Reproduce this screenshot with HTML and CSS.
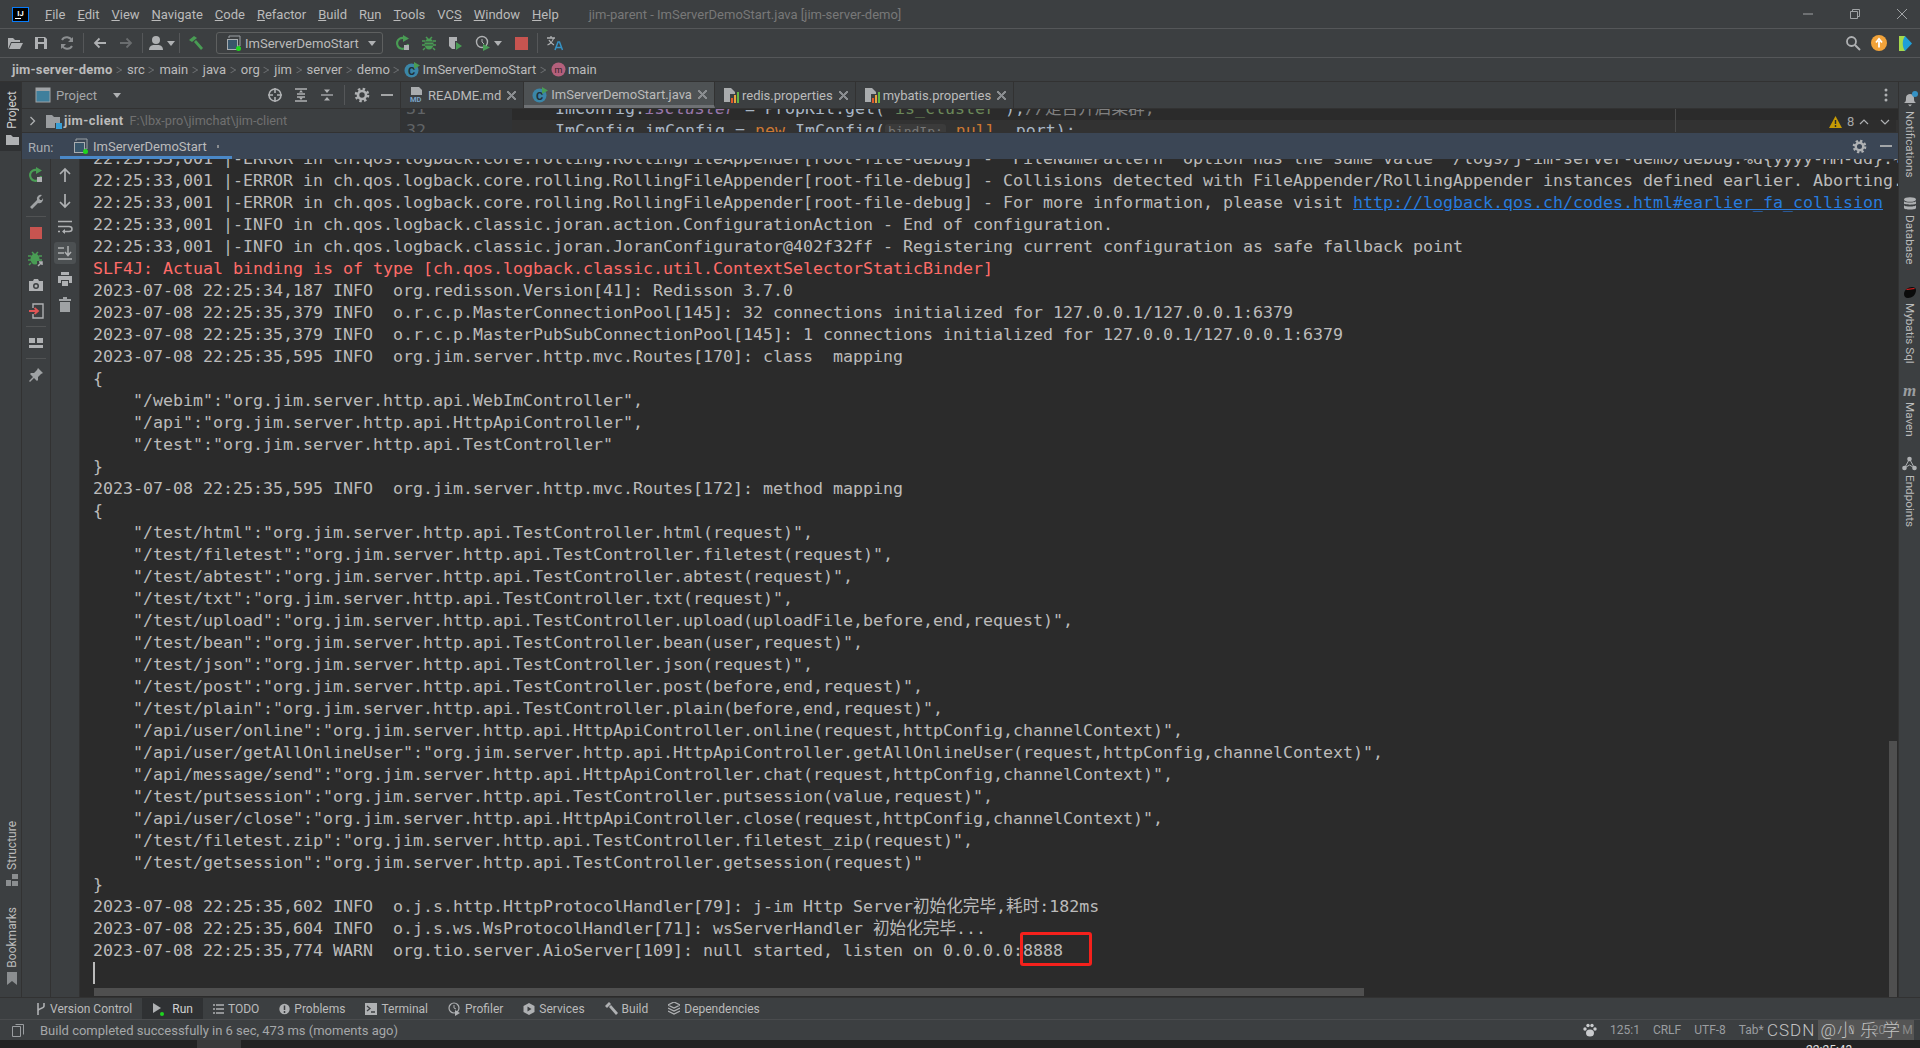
FILE: index.html
```html
<!DOCTYPE html>
<html>
<head>
    <meta charset="utf-8">
    <link rel="stylesheet" href="styles.css">
</head>
<body>
    <svg class="icon-defs" width="0" height="0">
        <symbol id="i-runcfg" viewBox="0 0 16 16">
            <path d="M3 3V1h11v10h-2" fill="none" stroke="#9aa0a4"/>
            <rect x="1.5" y="4.5" width="10" height="10" fill="#39566b" stroke="#a8adb0"/>
            <circle cx="12.5" cy="13.5" r="2.5" fill="#1fd51f"/>
        </symbol>
        <symbol id="i-class" viewBox="0 0 16 16">
            <circle cx="7.5" cy="8.5" r="7" fill="#3b86a8"/>
            <text x="7.5" y="12.5" font-size="11" font-family="Roboto" font-weight="700" text-anchor="middle" fill="#1f2f38">C</text>
            <path d="M10 0l6 3.5-6 3.5z" fill="#499c54"/>
        </symbol>
        <symbol id="i-props" viewBox="0 0 16 16">
            <path d="M1 1h7l4 4v2H7v8H1z" fill="#a9acae"/>
            <rect x="8" y="11" width="2" height="5" fill="#e05a2b"/>
            <rect x="11" y="8" width="2" height="8" fill="#e8a33d"/>
            <rect x="14" y="5" width="2" height="11" fill="#62b543"/>
        </symbol>
        <symbol id="i-gear" viewBox="0 0 16 16">
            <circle cx="8" cy="8" r="6" fill="none" stroke="currentColor" stroke-width="2.6" stroke-dasharray="2.4 2.3"/>
            <circle cx="8" cy="8" r="4" fill="none" stroke="currentColor" stroke-width="2.6"/>
        </symbol>
    </svg>

    <div class="ide">
        <header class="titlebar">
            <svg class="logo-ij" width="17" height="15" viewBox="0 0 17 15">
                <rect x=".5" y=".5" width="16" height="14" fill="#000" stroke="#087cfa"/>
                <text x="8.5" y="8.5" font-size="7.5" font-family="Roboto" font-weight="700" text-anchor="middle" fill="#fff">IJ</text>
                <rect x="3" y="11" width="6" height="1" fill="#fff"/>
            </svg>
            <nav class="menu">
                <span><u>F</u>ile</span>
                <span><u>E</u>dit</span>
                <span><u>V</u>iew</span>
                <span><u>N</u>avigate</span>
                <span><u>C</u>ode</span>
                <span><u>R</u>efactor</span>
                <span><u>B</u>uild</span>
                <span>R<u>u</u>n</span>
                <span><u>T</u>ools</span>
                <span>VC<u>S</u></span>
                <span><u>W</u>indow</span>
                <span><u>H</u>elp</span>
            </nav>
            <span class="window-title">jim-parent - ImServerDemoStart.java [jim-server-demo]</span>
            <div class="window-btns">
                <svg width="12" height="12" viewBox="0 0 12 12"><path d="M1 6h10" stroke="#a0a3a5"/></svg>
                <svg width="12" height="12" viewBox="0 0 12 12"><path d="M1.5 3.5h7v7h-7zM3.5 3V1.5h7v7H9" fill="none" stroke="#a0a3a5"/></svg>
                <svg width="12" height="12" viewBox="0 0 12 12"><path d="M1 1l10 10M11 1L1 11" stroke="#a0a3a5"/></svg>
            </div>
        </header>

        <div class="toolbar">
            <span class="tb"><svg width="16" height="16" viewBox="0 0 16 16"><path d="M1 3h5l2 2h5v2H4l-3 7z" fill="#afb1b3"/><path d="M4.500 8H16l-3 6H2z" fill="#afb1b3"/></svg></span>
            <span class="tb"><svg width="16" height="16" viewBox="0 0 16 16"><path d="M2 2h10l2 2v10H2z" fill="#afb1b3"/><rect x="5" y="3" width="6" height="4" fill="#3c3f41"/><rect x="5" y="9" width="6" height="5" fill="#3c3f41"/></svg></span>
            <span class="tb"><svg width="16" height="16" viewBox="0 0 16 16"><path d="M13 6a5.500 5.500 0 0 0-10-1M3 10a5.500 5.500 0 0 0 10 1" fill="none" stroke="#8b8e90" stroke-width="2"/><path d="M14 2v5H9zM2 14V9h5z" fill="#8b8e90"/></svg></span>
            <span class="tb-sep"></span>
            <span class="tb"><svg width="16" height="16" viewBox="0 0 16 16"><path d="M14 8H3M7.500 3.500L3 8l4.500 4.500" fill="none" stroke="#afb1b3" stroke-width="1.800"/></svg></span>
            <span class="tb"><svg width="16" height="16" viewBox="0 0 16 16"><path d="M2 8h11M8.500 3.500L13 8l-4.500 4.500" fill="none" stroke="#6a6d6f" stroke-width="1.800"/></svg></span>
            <span class="tb-sep"></span>
            <span class="tb tb-wide">
                <svg width="16" height="16" viewBox="0 0 16 16"><circle cx="8" cy="5" r="4" fill="#afb1b3"/><path d="M1 15c0-4 3-5 5-5h4c2 0 5 1 5 5z" fill="#afb1b3"/></svg>
                <i class="caret"></i>
            </span>
            <span class="tb-sep"></span>
            <span class="tb"><svg width="16" height="16" viewBox="0 0 16 16"><path d="M1 5l5-4 3 2-5 4zM6 7l2-2 7 8-2 2z" fill="#499c54"/></svg></span>
            <div class="run-config">
                <svg width="16" height="16"><use href="#i-runcfg"/></svg>
                <span>ImServerDemoStart</span>
                <i class="caret"></i>
            </div>
            <span class="tb"><svg width="16" height="16" viewBox="0 0 16 16"><path d="M13 9a5.500 5.500 0 1 1-4-6" fill="none" stroke="#499c54" stroke-width="2.200"/><path d="M8 0l6 3.500L8 7z" fill="#499c54"/><rect x="9" y="10" width="5" height="5" fill="#afb1b3"/></svg></span>
            <span class="tb"><svg width="16" height="16" viewBox="0 0 16 16"><ellipse cx="8" cy="9" rx="4.500" ry="5.500" fill="#499c54"/><path d="M5 2l2 2M11 2L9 4M1 6h3M12 6h3M1 10h3M12 10h3M2 15l2-2M14 15l-2-2" stroke="#499c54" stroke-width="1.500"/><path d="M4 7h8M4 10h8" stroke="#3c3f41"/></svg></span>
            <span class="tb"><svg width="16" height="16" viewBox="0 0 16 16"><path d="M2 2h6v12H5L2 11z" fill="#afb1b3"/><path d="M8 2h2v4H8z" fill="#afb1b3"/><path d="M9 7l6 4-6 4z" fill="#499c54"/></svg></span>
            <span class="tb tb-profile">
                <svg width="16" height="16" viewBox="0 0 16 16"><circle cx="7" cy="7" r="5.500" fill="none" stroke="#afb1b3" stroke-width="1.400"/><path d="M7 4v3l2 2" fill="none" stroke="#afb1b3"/><path d="M8 9l7 3.500L8 16z" fill="#499c54"/></svg>
                <i class="caret"></i>
            </span>
            <span class="tb"><span class="stop-square"></span></span>
            <span class="tb-sep"></span>
            <span class="tb"><svg width="17" height="16" viewBox="0 0 17 16"><path d="M1 3h8M5 1v2M7.500 3C7 6 4 9 1.500 10M3 5c1 2 3 4 5 5" fill="none" stroke="#afb1b3" stroke-width="1.300"/><path d="M9 15l3-8h1.500l3 8M10.500 12.500h4.500" fill="none" stroke="#3592c4" stroke-width="1.500"/></svg></span>
            <div class="toolbar-right">
                <span class="tb"><svg width="16" height="16" viewBox="0 0 16 16"><circle cx="6.500" cy="6.500" r="4.500" fill="none" stroke="#afb1b3" stroke-width="1.800"/><path d="M10 10l5 5" stroke="#afb1b3" stroke-width="2"/></svg></span>
                <span class="tb"><svg width="16" height="16" viewBox="0 0 16 16"><circle cx="8" cy="8" r="8" fill="#f2a33a"/><path d="M8 12.500V6M5 7.500L8 4l3 3.500" fill="none" stroke="#fff" stroke-width="1.800"/></svg></span>
                <span class="tb"><svg width="15" height="17" viewBox="0 0 15 17"><path d="M1 1l6 0 7 7.500-7 7.500H1z" fill="#1f9fd8"/><path d="M1 1l6 0c-3 4-3 11 0 15H1z" fill="#a6d94c"/></svg></span>
            </div>
        </div>

        <div class="breadcrumb">
            <b>jim-server-demo</b><i class="crumb-sep"></i>
            <span>src</span><i class="crumb-sep"></i>
            <span>main</span><i class="crumb-sep"></i>
            <span>java</span><i class="crumb-sep"></i>
            <span>org</span><i class="crumb-sep"></i>
            <span>jim</span><i class="crumb-sep"></i>
            <span>server</span><i class="crumb-sep"></i>
            <span>demo</span><i class="crumb-sep"></i>
            <svg class="crumb-icon" width="16" height="16"><use href="#i-class"/></svg>
            <span>ImServerDemoStart</span><i class="crumb-sep"></i>
            <svg class="crumb-icon" width="15" height="15" viewBox="0 0 15 15"><circle cx="7.500" cy="7.500" r="7" fill="#b4607c"/><text x="7.500" y="10.500" font-size="9" font-family="Roboto" text-anchor="middle" fill="#33222a">m</text></svg>
            <span>main</span>
        </div>

        <div class="workspace">
            <aside class="stripe stripe-left">
                <div class="stripe-btn stripe-btn-active">
                    <span class="stripe-label">Project</span>
                    <svg width="13" height="12" viewBox="0 0 13 12"><path d="M0 1h5l2 2h6v8H0z" fill="#afb1b3"/></svg>
                </div>
                <div class="stripe-bottom">
                    <div class="stripe-btn">
                        <span class="stripe-label">Structure</span>
                        <svg width="13" height="12" viewBox="0 0 13 12"><path d="M6 0h6v5H6zM0 6h5v6H0zM6 7h6v5H6z" fill="#8b8e90"/></svg>
                    </div>
                    <div class="stripe-btn">
                        <span class="stripe-label">Bookmarks</span>
                        <svg width="13" height="13" viewBox="0 0 13 13"><path d="M1 0h10v13l-5-4-5 4z" fill="#8b8e90"/></svg>
                    </div>
                </div>
            </aside>

            <main class="center">
                <div class="top-area">
                    <section class="project">
                        <div class="project-head">
                            <svg width="16" height="16" viewBox="0 0 16 16"><rect x="1" y="1" width="14" height="14" fill="#3f7f9c" stroke="#9fa3a6"/><rect x="1" y="1" width="14" height="3" fill="#9fa3a6"/></svg>
                            <span class="project-name">Project</span>
                            <i class="caret"></i>
                            <div class="project-actions">
                                <svg width="16" height="16" viewBox="0 0 16 16"><circle cx="8" cy="8" r="6" fill="none" stroke="#afb1b3" stroke-width="1.600"/><path d="M8 1v5M8 10v5M1 8h5M10 8h5" stroke="#afb1b3" stroke-width="1.600"/></svg>
                                <svg width="16" height="16" viewBox="0 0 16 16"><path d="M2 2h12M2 14h12M4 7h8M4 10h8" stroke="#afb1b3" stroke-width="1.300"/><path d="M8 3l2 2.500H6zM8 13l2-2.500H6z" fill="#afb1b3"/></svg>
                                <svg width="16" height="16" viewBox="0 0 16 16"><path d="M2 8h12" stroke="#afb1b3" stroke-width="1.300"/><path d="M8 6L5 2.500h6zM8 10l-3 3.500h6z" fill="#afb1b3"/></svg>
                                <span class="head-sep"></span>
                                <svg class="gear" width="16" height="16"><use href="#i-gear"/></svg>
                                <svg width="14" height="14" viewBox="0 0 14 14"><path d="M1 7h12" stroke="#afb1b3" stroke-width="1.800"/></svg>
                            </div>
                        </div>
                        <div class="tree-row">
                            <svg width="8" height="10" viewBox="0 0 8 10"><path d="M1.500 1l4 4-4 4" fill="none" stroke="#afb1b3" stroke-width="1.300"/></svg>
                            <svg width="16" height="16" viewBox="0 0 16 16"><path d="M0 2h6l2 2h6v6H9v5H0z" fill="#9a9da0"/><rect x="10" y="10" width="6" height="6" fill="#389fd6"/></svg>
                            <b>jim-client</b>
                            <span class="tree-path">F:\lbx-pro\jimchat\jim-client</span>
                        </div>
                    </section>

                    <section class="editor">
                        <div class="tabs">
                            <div class="tab">
                                <svg width="16" height="16" viewBox="0 0 16 16"><path d="M2 0h8l3 3v5H2z" fill="#a9acae"/><text x="1" y="15" font-size="7.500" font-family="Roboto" font-weight="700" fill="#7aa5c9">MD</text></svg>
                                <span>README.md</span><i class="tab-close"></i>
                            </div>
                            <div class="tab tab-active">
                                <svg width="16" height="16"><use href="#i-class"/></svg>
                                <span>ImServerDemoStart.java</span><i class="tab-close"></i>
                            </div>
                            <div class="tab">
                                <svg width="16" height="16"><use href="#i-props"/></svg>
                                <span>redis.properties</span><i class="tab-close"></i>
                            </div>
                            <div class="tab">
                                <svg width="16" height="16"><use href="#i-props"/></svg>
                                <span>mybatis.properties</span><i class="tab-close"></i>
                            </div>
                            <svg class="tabs-more" width="4" height="16" viewBox="0 0 4 16"><circle cx="2" cy="3" r="1.500" fill="#afb1b3"/><circle cx="2" cy="8" r="1.500" fill="#afb1b3"/><circle cx="2" cy="13" r="1.500" fill="#afb1b3"/></svg>
                        </div>
                        <div class="code-view">
                            <div class="code-line">
                                <span class="line-no">31</span>
                                <code>ImConfig.<em>isCluster</em> = PropKit.get(<span class="str">"is_cluster"</span>);<span class="cmt">//是否开启集群,</span></code>
                            </div>
                            <div class="code-line code-line-current">
                                <span class="line-no">32</span>
                                <code>ImConfig imConfig = <span class="kw">new</span> ImConfig(<span class="hint">bindIp:</span> <span class="kw">null</span>, port);</code>
                            </div>
                            <span class="margin-line"></span>
                            <div class="inspection">
                                <svg width="13" height="12" viewBox="0 0 13 12"><path d="M6.500 0L13 12H0z" fill="#c69a05"/><path d="M6.500 4v4M6.500 9v2" stroke="#2b2b2b" stroke-width="1.400"/></svg>
                                <span>8</span>
                                <svg width="10" height="6" viewBox="0 0 10 6"><path d="M1 5l4-4 4 4" fill="none" stroke="#afb1b3" stroke-width="1.200"/></svg>
                                <svg width="10" height="6" viewBox="0 0 10 6"><path d="M1 1l4 4 4-4" fill="none" stroke="#afb1b3" stroke-width="1.200"/></svg>
                            </div>
                        </div>
                    </section>
                </div>

                <section class="run-panel">
                    <div class="run-head">
                        <span class="run-label">Run:</span>
                        <div class="run-tab">
                            <svg width="16" height="16"><use href="#i-runcfg"/></svg>
                            <span>ImServerDemoStart</span>
                            <i class="tab-close"></i>
                        </div>
                        <div class="run-head-actions">
                            <svg class="gear" width="15" height="15"><use href="#i-gear"/></svg>
                            <svg width="14" height="14" viewBox="0 0 14 14"><path d="M1 7h12" stroke="#afb1b3" stroke-width="1.800"/></svg>
                        </div>
                    </div>
                    <div class="run-body">
                        <div class="run-tools">
                            <span class="rt"><svg width="16" height="16" viewBox="0 0 16 16"><path d="M13 9a5.500 5.500 0 1 1-4-6" fill="none" stroke="#499c54" stroke-width="2.200"/><path d="M8 0l6 3.500L8 7z" fill="#499c54"/><rect x="9" y="10" width="5" height="5" fill="#afb1b3"/></svg></span>
                            <span class="rt"><svg width="16" height="16" viewBox="0 0 16 16"><path d="M2 14l7-7a4 4 0 0 1 5-5l-3 3 1 2 2 0 1-2a4 4 0 0 1-5 5l-6 6z" fill="#9fa2a4"/></svg></span>
                            <span class="rt-sep"></span>
                            <span class="rt"><span class="stop-square stop-square-big"></span></span>
                            <span class="rt"><svg width="16" height="16" viewBox="0 0 16 16"><ellipse cx="7" cy="8" rx="4.500" ry="5.500" fill="#499c54"/><path d="M4 1l2 2M10 1L8 3M0 5h3M11 5h3M0 9h3M11 9h3M1 14l2-2" stroke="#499c54" stroke-width="1.500"/><path d="M9 10h7v6H9z" fill="#3c3f41"/><path d="M10 15l4-4M11 11h3v3" fill="none" stroke="#afb1b3" stroke-width="1.500"/></svg></span>
                            <span class="rt"><svg width="16" height="16" viewBox="0 0 16 16"><path d="M1 4h4l1-2h4l1 2h4v10H1z" fill="#afb1b3"/><circle cx="8" cy="9" r="3" fill="#3c3f41"/><circle cx="8" cy="9" r="1.500" fill="#afb1b3"/></svg></span>
                            <span class="rt"><svg width="16" height="16" viewBox="0 0 16 16"><path d="M5 5V1h10v14H5v-4" fill="none" stroke="#afb1b3" stroke-width="1.400"/><path d="M1 8h8M6.500 5L10 8l-3.500 3" fill="none" stroke="#e05555" stroke-width="1.800"/></svg></span>
                            <span class="rt-sep"></span>
                            <span class="rt"><svg width="16" height="16" viewBox="0 0 16 16"><path d="M1 3h6v5H1zM9 3h6v5H9zM1 10h14v3H1z" fill="#afb1b3"/></svg></span>
                            <span class="rt-sep"></span>
                            <span class="rt"><svg width="16" height="16" viewBox="0 0 16 16"><path d="M10 1l5 5-2 1-3 3v3l-1 1-3-3-4 4-1-1 4-4-3-3 1-1h3l3-3z" fill="#9fa2a4"/></svg></span>
                        </div>
                        <div class="run-tools">
                            <span class="rt"><svg width="16" height="16" viewBox="0 0 16 16"><path d="M8 15V2M3 7l5-5 5 5" fill="none" stroke="#afb1b3" stroke-width="1.700"/></svg></span>
                            <span class="rt"><svg width="16" height="16" viewBox="0 0 16 16"><path d="M8 1v13M3 9l5 5 5-5" fill="none" stroke="#afb1b3" stroke-width="1.700"/></svg></span>
                            <span class="rt"><svg width="16" height="16" viewBox="0 0 16 16"><path d="M1 2.500h14M1 7.500h11c4 0 4 5 0 5H6M1 12.500h2" fill="none" stroke="#afb1b3" stroke-width="1.500"/><path d="M8 10l-3 2.500L8 15z" fill="#afb1b3"/></svg></span>
                            <span class="rt rt-on"><svg width="16" height="16" viewBox="0 0 16 16"><path d="M1 3h6M1 8h6M1 14h14M11 1v9M8 7l3 3.500L14 7" fill="none" stroke="#afb1b3" stroke-width="1.500"/></svg></span>
                            <span class="rt"><svg width="16" height="16" viewBox="0 0 16 16"><path d="M4 1h8v3H4zM1 5h14v7h-3V9H4v3H1zM5 10h6v5H5z" fill="#afb1b3"/></svg></span>
                            <span class="rt"><svg width="16" height="16" viewBox="0 0 16 16"><path d="M6 0h4v2h4v2H2V2h4zM3 5h10v10H3z" fill="#9fa2a4"/></svg></span>
                        </div>
                        <div class="console">
<pre class="log">22:25:33,001 |-ERROR in ch.qos.logback.core.rolling.RollingFileAppender[root-file-debug] - "FileNamePattern" option has the same value "/logs/j-im-server-demo/debug.%d{yyyy-MM-dd}.%i.log"
22:25:33,001 |-ERROR in ch.qos.logback.core.rolling.RollingFileAppender[root-file-debug] - Collisions detected with FileAppender/RollingAppender instances defined earlier. Aborting.
22:25:33,001 |-ERROR in ch.qos.logback.core.rolling.RollingFileAppender[root-file-debug] - For more information, please visit <a class="log-link">http://logback.qos.ch/codes.html#earlier_fa_collision</a>
22:25:33,001 |-INFO in ch.qos.logback.classic.joran.action.ConfigurationAction - End of configuration.
22:25:33,001 |-INFO in ch.qos.logback.classic.joran.JoranConfigurator@402f32ff - Registering current configuration as safe fallback point
<span class="log-err">SLF4J: Actual binding is of type [ch.qos.logback.classic.util.ContextSelectorStaticBinder]</span>
2023-07-08 22:25:34,187 INFO  org.redisson.Version[41]: Redisson 3.7.0
2023-07-08 22:25:35,379 INFO  o.r.c.p.MasterConnectionPool[145]: 32 connections initialized for 127.0.0.1/127.0.0.1:6379
2023-07-08 22:25:35,379 INFO  o.r.c.p.MasterPubSubConnectionPool[145]: 1 connections initialized for 127.0.0.1/127.0.0.1:6379
2023-07-08 22:25:35,595 INFO  org.jim.server.http.mvc.Routes[170]: class  mapping
{
    "/webim":"org.jim.server.http.api.WebImController",
    "/api":"org.jim.server.http.api.HttpApiController",
    "/test":"org.jim.server.http.api.TestController"
}
2023-07-08 22:25:35,595 INFO  org.jim.server.http.mvc.Routes[172]: method mapping
{
    "/test/html":"org.jim.server.http.api.TestController.html(request)",
    "/test/filetest":"org.jim.server.http.api.TestController.filetest(request)",
    "/test/abtest":"org.jim.server.http.api.TestController.abtest(request)",
    "/test/txt":"org.jim.server.http.api.TestController.txt(request)",
    "/test/upload":"org.jim.server.http.api.TestController.upload(uploadFile,before,end,request)",
    "/test/bean":"org.jim.server.http.api.TestController.bean(user,request)",
    "/test/json":"org.jim.server.http.api.TestController.json(request)",
    "/test/post":"org.jim.server.http.api.TestController.post(before,end,request)",
    "/test/plain":"org.jim.server.http.api.TestController.plain(before,end,request)",
    "/api/user/online":"org.jim.server.http.api.HttpApiController.online(request,httpConfig,channelContext)",
    "/api/user/getAllOnlineUser":"org.jim.server.http.api.HttpApiController.getAllOnlineUser(request,httpConfig,channelContext)",
    "/api/message/send":"org.jim.server.http.api.HttpApiController.chat(request,httpConfig,channelContext)",
    "/test/putsession":"org.jim.server.http.api.TestController.putsession(value,request)",
    "/api/user/close":"org.jim.server.http.api.HttpApiController.close(request,httpConfig,channelContext)",
    "/test/filetest.zip":"org.jim.server.http.api.TestController.filetest_zip(request)",
    "/test/getsession":"org.jim.server.http.api.TestController.getsession(request)"
}
2023-07-08 22:25:35,602 INFO  o.j.s.http.HttpProtocolHandler[79]: j-im Http Server初始化完毕,耗时:182ms
2023-07-08 22:25:35,604 INFO  o.j.s.ws.WsProtocolHandler[71]: wsServerHandler 初始化完毕...
2023-07-08 22:25:35,774 WARN  org.tio.server.AioServer[109]: null started, listen on 0.0.0.0:8888
<span class="caret-line"></span></pre>
                            <span class="red-box"></span>
                            <span class="scroll-v"></span>
                            <span class="scroll-h"></span>
                        </div>
                    </div>
                </section>
            </main>

            <aside class="stripe stripe-right">
                <div class="stripe-btn">
                    <svg width="16" height="16" viewBox="0 0 16 16"><path d="M2 12c2-1 2-3 2-5 0-3 2-4 4-4s4 1 4 4c0 2 0 4 2 5zM6 13.500h4L8 15.500z" fill="#afb1b3"/><circle cx="13" cy="3" r="3" fill="#3592c4"/></svg>
                    <span class="stripe-label">Notifications</span>
                </div>
                <div class="stripe-btn">
                    <svg width="14" height="14" viewBox="0 0 14 14"><ellipse cx="7" cy="2.500" rx="6" ry="2.300" fill="#afb1b3"/><path d="M1 4v2.500C1 8 13 8 13 6.500V4C13 6 1 6 1 4zM1 8v3c0 2 12 2 12 0V8C13 10 1 10 1 8z" fill="#afb1b3"/></svg>
                    <span class="stripe-label">Database</span>
                </div>
                <div class="stripe-btn">
                    <svg width="14" height="14" viewBox="0 0 14 14"><path d="M1 9c0-4 4-7 8-7 2 0 4 1 4 3 0 5-4 8-8 8-3 0-4-2-4-4z" fill="#0b0b0b"/><path d="M3 4l8-1 1 1-8 1z" fill="#d61f1f"/></svg>
                    <span class="stripe-label">Mybatis Sql</span>
                </div>
                <div class="stripe-btn">
                    <span class="maven-m">m</span>
                    <span class="stripe-label">Maven</span>
                </div>
                <div class="stripe-btn">
                    <svg width="15" height="15" viewBox="0 0 15 15"><path d="M2.500 12L7.500 3l5 9M2.500 12l5-3 5 3" fill="none" stroke="#afb1b3"/><circle cx="2.500" cy="12" r="2.300" fill="#afb1b3"/><circle cx="7.500" cy="3" r="2.300" fill="#afb1b3"/><circle cx="12.500" cy="12" r="2.300" fill="#afb1b3"/></svg>
                    <span class="stripe-label">Endpoints</span>
                </div>
            </aside>
        </div>

        <div class="toolwindows">
            <div class="tw"><svg width="10" height="14" viewBox="0 0 10 14"><path d="M2 1v12M8 1v3c0 3-6 2-6 5" fill="none" stroke="#afb1b3" stroke-width="1.600"/></svg><span>Version Control</span></div>
            <div class="tw tw-active"><svg width="14" height="14" viewBox="0 0 14 14"><path d="M1 1l8 5-8 5z" fill="#afb1b3"/><circle cx="10" cy="12" r="2" fill="#1fd51f"/></svg><span>Run</span></div>
            <div class="tw"><svg width="11" height="10" viewBox="0 0 11 10"><path d="M0 1h2M3 1h8M0 5h2M3 5h8M0 9h2M3 9h8" stroke="#afb1b3" stroke-width="1.500"/></svg><span>TODO</span></div>
            <div class="tw"><svg width="11" height="12" viewBox="0 0 11 12"><circle cx="5.500" cy="6" r="5.200" fill="#afb1b3"/><path d="M5.500 2.500v4.500M5.500 8v2" stroke="#3c3f41" stroke-width="1.500"/></svg><span>Problems</span></div>
            <div class="tw"><svg width="12" height="12" viewBox="0 0 12 12"><rect width="12" height="12" fill="#afb1b3"/><path d="M2 3l3 2.500L2 8M6 9h4" fill="none" stroke="#3c3f41" stroke-width="1.300"/></svg><span>Terminal</span></div>
            <div class="tw"><svg width="13" height="14" viewBox="0 0 13 14"><circle cx="6" cy="6" r="5" fill="none" stroke="#afb1b3" stroke-width="1.200"/><path d="M6 3v3l2 1" fill="none" stroke="#afb1b3"/><path d="M7 8l5 3-5 3z" fill="#afb1b3"/></svg><span>Profiler</span></div>
            <div class="tw"><svg width="12" height="12" viewBox="0 0 12 12"><path d="M6 0l5.500 3v6L6 12 .5 9V3z" fill="#afb1b3"/><path d="M4.500 3.500l4 2.500-4 2.500z" fill="#3c3f41"/></svg><span>Services</span></div>
            <div class="tw"><svg width="13" height="13" viewBox="0 0 13 13"><path d="M0 4l4-4 2 2-4 4zM4 5l2-2 7 8-2 2z" fill="#afb1b3"/></svg><span>Build</span></div>
            <div class="tw"><svg width="12" height="13" viewBox="0 0 12 13"><path d="M6 0l6 3-6 3-6-3zM0 6l6 3 6-3M0 9l6 3 6-3" fill="none" stroke="#afb1b3" stroke-width="1.300"/></svg><span>Dependencies</span></div>
        </div>

        <footer class="statusbar">
            <svg width="12" height="13" viewBox="0 0 12 13"><path d="M3.500.5h8v10M.5 2.500h8v10h-8z" fill="none" stroke="#9a9da0"/></svg>
            <span class="status-msg">Build completed successfully in 6 sec, 473 ms (moments ago)</span>
            <div class="status-right">
                <svg width="14" height="14" viewBox="0 0 14 14"><ellipse cx="7" cy="10" rx="4" ry="3.500" fill="#c9cbcd"/><circle cx="2" cy="6" r="1.700" fill="#c9cbcd"/><circle cx="5" cy="2.500" r="1.700" fill="#c9cbcd"/><circle cx="9" cy="2.500" r="1.700" fill="#c9cbcd"/><circle cx="12" cy="6" r="1.700" fill="#c9cbcd"/></svg>
                <span>125:1</span>
                <span>CRLF</span>
                <span>UTF-8</span>
                <span>Tab*</span>
            </div>
            <div class="watermark-back">0 20 M</div>
            <div class="watermark">CSDN @<span class="watermark-name">小乐学</span></div>
        </footer>

        <div class="desktop">
            <span class="desktop-block"></span>
            <span class="desktop-time">22:25:43</span>
        </div>
    </div>
</body>
</html>
```

FILE: styles.css
```css
* {
    margin: 0;
    padding: 0;
    box-sizing: border-box;
}

html, body {
    height: 100%;
    overflow: hidden;
}

body {
    font-family: Roboto, "Noto Sans CJK SC", sans-serif;
    font-size: 13px;
    color: #bbbbbb;
    background-color: #3c3f41;
}

.icon-defs {
    position: absolute;
}

svg {
    flex: none;
    display: block;
}

i {
    font-style: normal;
}

.ide {
    display: flex;
    flex-direction: column;
    height: 1048px;
}

.caret {
    width: 0;
    height: 0;
    border-left: 4.5px solid transparent;
    border-right: 4.5px solid transparent;
    border-top: 5px solid #afb1b3;
}

/* title bar */
.titlebar {
    height: 29px;
    flex: none;
    display: flex;
    align-items: center;
    padding-left: 12px;
    border-bottom: 1px solid #555759;
}

.menu {
    display: flex;
    gap: 12px;
    margin-left: 16px;
}

.window-title {
    margin-left: 30px;
    color: #787878;
}

.window-btns {
    margin-left: auto;
    display: flex;
    gap: 35px;
    padding-right: 12px;
}

/* main toolbar */
.toolbar {
    height: 29px;
    flex: none;
    display: flex;
    align-items: center;
    padding-left: 2px;
    border-bottom: 1px solid #555759;
}

.tb {
    width: 26px;
    height: 26px;
    flex: none;
    display: flex;
    align-items: center;
    justify-content: center;
    gap: 3px;
}

.tb-wide {
    width: 30px;
}

.tb-profile {
    width: 40px;
}

.tb-sep {
    width: 1px;
    height: 20px;
    margin: 0 3px;
    background-color: #555759;
}

.run-config {
    width: 167px;
    height: 22px;
    margin: 0 7px;
    padding-left: 9px;
    display: flex;
    align-items: center;
    gap: 3px;
    border: 1px solid #5e6060;
    border-radius: 3px;
}

.run-config .caret {
    margin-left: 6px;
}

.stop-square {
    width: 13px;
    height: 13px;
    background-color: #c75450;
}

.stop-square-big {
    width: 12px;
    height: 12px;
}

.toolbar-right {
    margin-left: auto;
    display: flex;
    padding-right: 2px;
}

/* navigation bar */
.breadcrumb {
    height: 24px;
    flex: none;
    display: flex;
    align-items: center;
    padding-left: 12px;
    border-bottom: 1px solid #323232;
}

.breadcrumb b {
    font-weight: 700;
    letter-spacing: .15px;
}

.crumb-sep {
    width: 6px;
    height: 6px;
    margin: 0 7px 0 1.6px;
    border-top: 1px solid #6b6e70;
    border-right: 1px solid #6b6e70;
    transform: rotate(45deg) skew(-12deg, -12deg);
}

.crumb-icon {
    margin-right: 2px;
}

/* body of the window */
.workspace {
    height: 915px;
    flex: none;
    display: flex;
}

.stripe {
    width: 22px;
    flex: none;
    display: flex;
    flex-direction: column;
    align-items: center;
    font-size: 12px;
}

.stripe-left {
    border-right: 1px solid #323232;
}

.stripe-right {
    padding-top: 9px;
    gap: 20px;
    font-size: 11.7px;
    border-left: 1px solid #323232;
}

.stripe-btn {
    display: flex;
    flex-direction: column;
    align-items: center;
    gap: 4px;
}

.stripe-label {
    writing-mode: vertical-rl;
}

.stripe-left .stripe-label {
    transform: rotate(180deg);
}

.stripe-left .stripe-btn > * {
    margin-left: 3px;
}

.stripe-btn-active {
    width: 100%;
    padding: 9px 0 5px;
    gap: 5px;
    color: #d0d0d0;
    background-color: #2f3133;
}

.stripe-bottom {
    margin-top: auto;
    padding-bottom: 12px;
    display: flex;
    flex-direction: column;
    gap: 21px;
}

.maven-m {
    height: 14px;
    font: italic 700 17px/13px "Liberation Serif", serif;
    color: #9a9da0;
}

.center {
    flex: 1;
    min-width: 0;
    display: flex;
    flex-direction: column;
}

.top-area {
    height: 51px;
    flex: none;
    display: flex;
    border-bottom: 1px solid #323232;
}

/* project tool window */
.project {
    width: 379px;
    flex: none;
    border-right: 1px solid #323232;
}

.project-head {
    height: 27px;
    display: flex;
    align-items: center;
    padding-left: 13px;
    border-bottom: 1px solid #323232;
}

.project-name {
    margin-left: 5px;
    color: #a5a7a9;
}

.project-head .caret {
    margin-left: 16px;
}

.project-actions {
    margin-left: auto;
    display: flex;
    align-items: center;
    gap: 10px;
    padding-right: 6px;
}

.gear {
    color: #afb1b3;
}

.head-sep {
    width: 1px;
    height: 20px;
    margin: 0 -1px;
    background-color: #555759;
}

.tree-row {
    height: 23px;
    display: flex;
    align-items: center;
    padding-left: 7px;
}

.tree-row b {
    margin-left: 2px;
    font-weight: 700;
    letter-spacing: .4px;
}

.tree-row svg:first-child {
    margin-right: 9px;
}

.tree-path {
    margin-left: 6px;
    font-size: 12.7px;
    color: #707070;
}

/* editor */
.editor {
    flex: 1;
    min-width: 0;
    display: flex;
    flex-direction: column;
}

.tabs {
    height: 27px;
    flex: none;
    display: flex;
    border-bottom: 1px solid #323232;
}

.tab {
    display: flex;
    align-items: center;
    gap: 3px;
    padding: 0 7px 0 8px;
    border-right: 1px solid #323232;
}

.tab-active {
    background-color: #4e5254;
    border-bottom: 3px solid #6e7174;
    padding-top: 2px;
}

.tab-close {
    width: 9px;
    height: 9px;
    margin-left: 3px;
    background:
        linear-gradient(45deg, transparent 42%, #8a8d90 42%, #8a8d90 58%, transparent 58%),
        linear-gradient(-45deg, transparent 42%, #8a8d90 42%, #8a8d90 58%, transparent 58%);
}

.tabs-more {
    margin: 5px 10px 0 auto;
}

.code-view {
    position: relative;
    flex: 1;
    min-height: 0;
    overflow: hidden;
    background-color: #2b2b2b;
    font: 16.63px/22px "DejaVu Sans Mono", "Noto Sans CJK SC", monospace;
    color: #a9b7c6;
}

.code-line {
    height: 22px;
    display: flex;
    white-space: pre;
}

.code-line:first-child {
    margin-top: -11px;
}

.code-line-current {
    background-color: #323232;
}

.line-no {
    width: 111px;
    flex: none;
    padding-left: 5px;
    color: #606366;
    background-color: #313335;
}

code {
    padding-left: 43px;
    font: inherit;
}

code em {
    font-style: italic;
    color: #9876aa;
}

.str {
    color: #6a8759;
}

.cmt {
    color: #808080;
}

.kw {
    color: #cc7832;
}

.hint {
    padding: 0 3px;
    font-size: 13px;
    color: #787878;
    background-color: #3b3b3b;
    border-radius: 3px;
}

.margin-line {
    position: absolute;
    top: 0;
    bottom: 0;
    left: 1274px;
    width: 1px;
    background-color: #4a4a4a;
}

/* warning counter, sits on top of the editor text */
.inspection {
    position: absolute;
    top: 11px;
    right: 2px;
    width: 76px;
    height: 13px;
    padding-left: 9px;
    display: flex;
    align-items: flex-start;
    gap: 5px;
    font: 13px/14px Roboto, sans-serif;
    color: #a5a7a9;
    background-color: #2d2d2d;
}

.inspection svg:nth-of-type(1) {
    margin-top: -4px;
}

.inspection span {
    margin-top: -5px;
}

.inspection svg:nth-of-type(2) {
    margin-top: -1px;
}

.inspection svg:nth-of-type(3) {
    margin-top: -1px;
    margin-left: 6px;
}

/* run tool window */
.run-panel {
    flex: 1;
    min-height: 0;
    display: flex;
    flex-direction: column;
}

.run-head {
    height: 26px;
    flex: none;
    display: flex;
    align-items: center;
    padding-left: 6px;
    background-color: #3b4655;
}

.run-label {
    width: 32px;
    padding-top: 2px;
    color: #a9adb2;
}

.run-tab {
    width: 172px;
    height: 26px;
    padding: 3px 13px 0;
    display: flex;
    align-items: center;
    gap: 4px;
    border-bottom: 3px solid #4a88c7;
}

.run-tab .tab-close {
    margin-left: 6px;
}

.run-head-actions {
    margin-left: auto;
    display: flex;
    align-items: center;
    gap: 12px;
    padding-right: 5px;
}

.run-body {
    flex: 1;
    min-height: 0;
    display: flex;
}

.run-tools {
    width: 29px;
    flex: none;
    padding-top: 3px;
    display: flex;
    flex-direction: column;
    align-items: center;
    border-right: 1px solid #323232;
}

.rt {
    width: 22px;
    height: 26px;
    flex: none;
    display: flex;
    align-items: center;
    justify-content: center;
}

.rt-on {
    height: 22px;
    margin: 2px 0;
    background-color: #4c5052;
    border-radius: 3px;
}

.rt-sep {
    width: 20px;
    height: 1px;
    flex: none;
    margin: 2px 0 3px;
    background-color: #515354;
}

.console {
    position: relative;
    flex: 1;
    min-width: 0;
    overflow: hidden;
    background-color: #2b2b2b;
}

.log {
    margin-top: -11px;
    padding-left: 13px;
    font: 16.63px/22px "DejaVu Sans Mono", "Noto Sans CJK SC", monospace;
    color: #bbbbbb;
    white-space: pre;
}

.log-err {
    color: #ff6b68;
}

.log-link {
    color: #287bde;
    text-decoration: underline;
}

.caret-line {
    display: inline-block;
    width: 2px;
    height: 22px;
    background-color: #bbbbbb;
    vertical-align: top;
}

/* highlight drawn over the port number */
.red-box {
    position: absolute;
    left: 940px;
    top: 773px;
    width: 72px;
    height: 34px;
    border: 3px solid #f5211c;
    border-radius: 3px;
}

.scroll-v {
    position: absolute;
    right: 1px;
    top: 582px;
    bottom: 0;
    width: 8px;
    background-color: #4f4f4f;
}

.scroll-h {
    position: absolute;
    left: 14px;
    bottom: 1px;
    width: 1270px;
    height: 8px;
    background-color: #4f4f4f;
}

/* bottom tool buttons */
.toolwindows {
    height: 23px;
    flex: none;
    display: flex;
    align-items: stretch;
    padding-left: 26px;
    font-size: 12px;
    border-top: 1px solid #323232;
    border-bottom: 1px solid #4a4c4e;
}

.tw {
    display: flex;
    align-items: center;
    gap: 4px;
    padding: 0 10px;
}

.tw-active {
    gap: 6px;
    color: #d0d0d0;
    background-color: #2f3133;
}

/* status bar */
.statusbar {
    position: relative;
    height: 20px;
    flex: none;
    display: flex;
    align-items: center;
    padding-left: 12px;
    font-size: 13px;
}

.status-msg {
    margin-left: 16px;
    color: #a5a7a9;
}

.status-right {
    position: absolute;
    left: 1583px;
    top: 0;
    height: 20px;
    display: flex;
    align-items: center;
    gap: 13px;
    font-size: 12px;
    color: #9a9da0;
}

.watermark-back {
    position: absolute;
    left: 1818px;
    top: 0;
    width: 96px;
    height: 20px;
    padding-left: 30px;
    font-size: 12px;
    line-height: 20px;
    word-spacing: 14px;
    color: #8a8a8a;
    background-color: #555555;
}

.watermark {
    position: absolute;
    left: 1767px;
    top: -2px;
    font-size: 17px;
    font-weight: 300;
    line-height: 24px;
    letter-spacing: 1px;
    color: #c4c4c4;
    white-space: nowrap;
}

.watermark-name {
    letter-spacing: 6px;
}

/* strip of the desktop under the IDE window */
.desktop {
    position: relative;
    flex: 1;
    overflow: hidden;
    background-color: #232323;
}

.desktop-block {
    display: block;
    width: 44px;
    height: 8px;
    margin-left: 197px;
    background-color: #3a3a3a;
}

.desktop-time {
    position: absolute;
    left: 1806px;
    top: 3px;
    font-size: 12px;
    line-height: 14px;
    color: #e0e0e0;
}
```
